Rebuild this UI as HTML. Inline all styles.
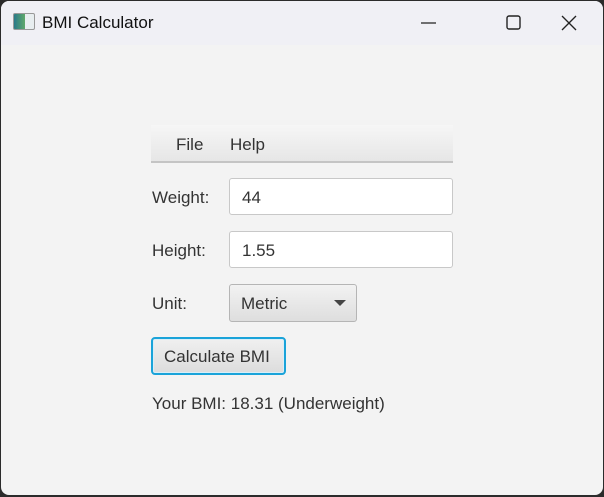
<!DOCTYPE html>
<html><head><style>
*{margin:0;padding:0;box-sizing:border-box}
body{width:604px;height:497px;background:#2b2b2b;position:relative;overflow:hidden;font-family:"Liberation Sans",sans-serif;color:#333}
.win{position:absolute;left:1px;top:1px;width:602px;height:494px;background:#f3f3f3;border-radius:8px;overflow:hidden}
.tb{position:absolute;left:0;top:0;width:100%;height:44px;background:#f0f0f5}
.title{position:absolute;left:41px;top:12px;font-size:17px;color:#111}
.icon{position:absolute;left:12px;top:12px;width:22px;height:17px;border:1px solid #999;background:linear-gradient(90deg,#2a7a8a 0,#5fa86a 55%,#e8eef0 55%);border-radius:2px}
.menu{position:absolute;left:150px;top:124px;width:302px;height:38px;background:linear-gradient(#f6f6f6,#e6e6e6);border-bottom:2px solid #c4c4c4}
.menu span{position:absolute;top:10px;font-size:17px}
.lbl{position:absolute;left:151px;font-size:17px}
.tf{position:absolute;left:228px;width:224px;height:37px;background:#fff;border:1px solid #c8c8c8;border-radius:3px;padding:9px 12px;font-size:17px}
.combo{position:absolute;left:228px;top:283px;width:128px;height:38px;border:1px solid #b5b5b5;border-radius:3px;background:linear-gradient(#f2f2f2,#dedede);font-size:17px;padding:9px 11px}
.arr{position:absolute;right:10px;top:15px;width:0;height:0;border-left:6px solid transparent;border-right:6px solid transparent;border-top:6px solid #444}
.btn{position:absolute;left:150px;top:336px;width:135px;height:38px;border:2px solid #1aa3d9;border-radius:4px;background:linear-gradient(#f0f0f0,#dcdcdc);font-size:17px;padding:8px 0 0 11px;box-shadow:inset 0 0 0 1px #d8eef8;white-space:nowrap}
</style></head><body>
<div class="win">
<div class="tb">
<div class="icon"></div>
<div class="title">BMI Calculator</div>
<svg style="position:absolute;left:418px;top:14px" width="160" height="16">
<line x1="2" y1="8" x2="17" y2="8" stroke="#222" stroke-width="1.3"/>
<rect x="88" y="1" width="13" height="13" rx="2" fill="none" stroke="#222" stroke-width="1.4"/>
<line x1="143" y1="1" x2="157" y2="15" stroke="#222" stroke-width="1.3"/>
<line x1="157" y1="1" x2="143" y2="15" stroke="#222" stroke-width="1.3"/>
</svg>
</div>
<div class="menu"><span style="left:25px">File</span><span style="left:79px">Help</span></div>
<div class="lbl" style="top:187px">Weight:</div>
<div class="tf" style="top:177px">44</div>
<div class="lbl" style="top:240px">Height:</div>
<div class="tf" style="top:230px">1.55</div>
<div class="lbl" style="top:293px">Unit:</div>
<div class="combo">Metric<div class="arr"></div></div>
<div class="btn">Calculate BMI</div>
<div class="lbl" style="top:393px">Your BMI: 18.31 (Underweight)</div>
</div>
</body></html>
